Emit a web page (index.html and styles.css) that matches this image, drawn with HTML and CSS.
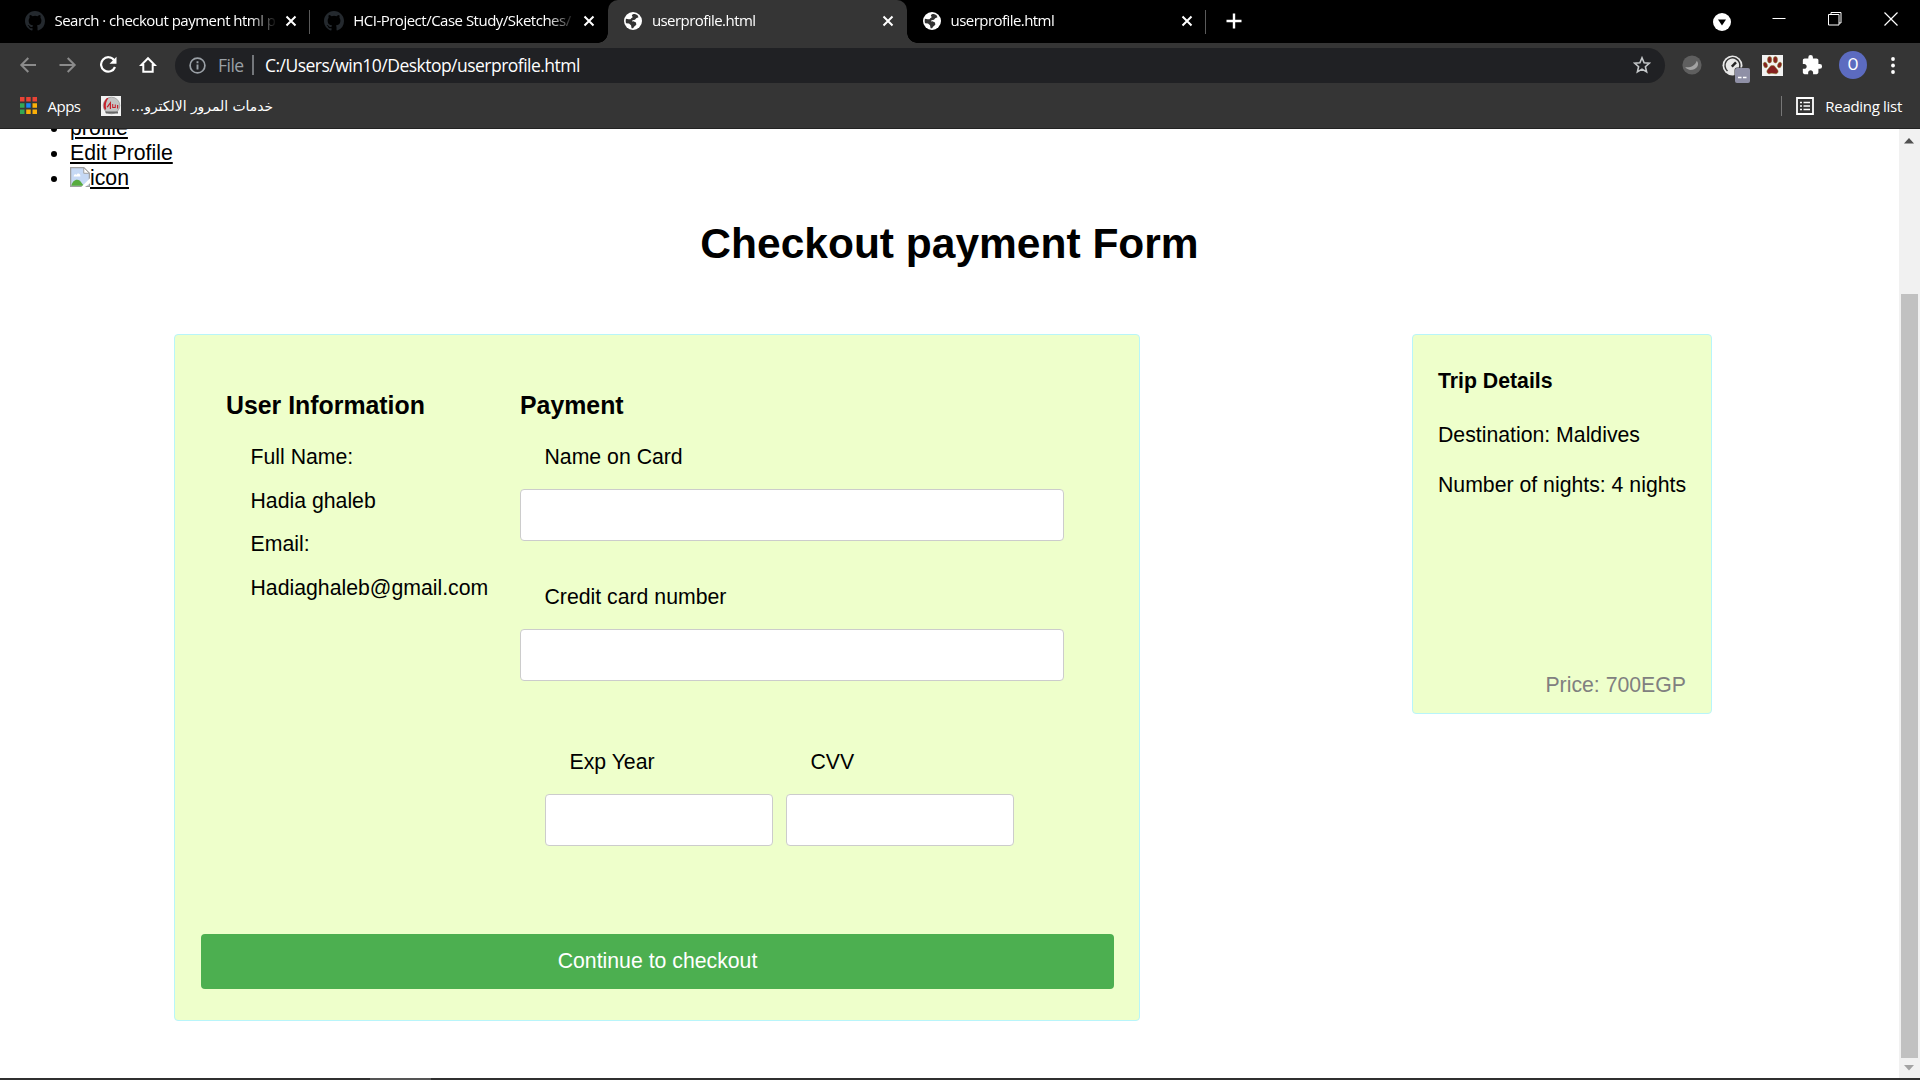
FILE: index.html
```html
<!DOCTYPE html>
<html lang="en">
<head>
<meta charset="utf-8">
<title>userprofile.html</title>
<link rel="stylesheet" href="styles.css">
</head>
<body>
<svg class="defs" width="0" height="0">
  <symbol id="github" viewBox="0 0 16 16"><path d="M8 0C3.58 0 0 3.58 0 8c0 3.54 2.29 6.53 5.47 7.59.4.07.55-.17.55-.38v-1.49c-2.01.37-2.53-.49-2.69-.94-.09-.23-.48-.94-.82-1.13-.28-.15-.68-.52-.01-.53.63-.01 1.08.58 1.23.82.72 1.21 1.87.87 2.33.66.07-.52.28-.87.51-1.07-1.78-.2-3.64-.89-3.64-3.95 0-.87.31-1.59.82-2.15-.08-.2-.36-1.02.08-2.12 0 0 .67-.21 2.2.82a7.6 7.6 0 0 1 4 0c1.53-1.04 2.2-.82 2.2-.82.44 1.1.16 1.92.08 2.12.51.56.82 1.27.82 2.15 0 3.07-1.87 3.75-3.65 3.95.29.25.54.73.54 1.48v2.2c0 .21.15.46.55.38A8 8 0 0 0 16 8c0-4.42-3.58-8-8-8z" fill="#24292e"/></symbol>
  <symbol id="globe" viewBox="0 0 18 18"><circle cx="9" cy="9" r="9" fill="#fff"/><path class="land" d="M9.500 2C8 2.600 7.500 3.500 8.200 4.200 9 5 8.600 5.800 7.500 6L6.500 7.300 4.500 7.200 2 6.800C1.600 8 1.600 10 2.100 11.200L5 11.500 7 13.300 7.600 16.200C9 16.500 9.600 16 9.800 15L12.300 12.800 12 10.500 9.500 9.300 8 9.500 8.500 8.200 11 7.800 12.200 6.300 14.500 5.200 13.500 3.300C12.500 2.400 11 1.800 9.500 2Z"/></symbol>
  <symbol id="close" viewBox="0 0 12 12"><path d="M1.500 1.500l9 9M10.500 1.500l-9 9" stroke="#fff" stroke-width="2" fill="none"/></symbol>
</svg>
<div class="window">
  <header class="tabstrip">
    <div class="tab"><svg class="fav big"><use href="#github"/></svg><span class="tab-title t1">Search · checkout payment html p</span><svg class="x"><use href="#close"/></svg></div>
    <div class="tab plain"><svg class="fav big"><use href="#github"/></svg><span class="tab-title t2">HCI-Project/Case Study/Sketches/</span><svg class="x"><use href="#close"/></svg></div>
    <div class="tab active"><svg class="fav"><use href="#globe"/></svg><span class="tab-title t3">userprofile.html</span><svg class="x"><use href="#close"/></svg></div>
    <div class="tab dark"><svg class="fav"><use href="#globe"/></svg><span class="tab-title t3">userprofile.html</span><svg class="x"><use href="#close"/></svg></div>
    <svg class="newtab" viewBox="0 0 16 16"><path d="M8 0.500v15M0.500 8h15" stroke="#fff" stroke-width="2.400"/></svg>
    <div class="controls">
      <svg width="18" height="18" viewBox="0 0 18 18"><circle cx="9" cy="9" r="9" fill="#fff"/><path d="M5 6.500h8L9 12.500z" fill="#000"/></svg>
      <svg width="14" height="14" viewBox="0 0 14 14"><path d="M0.500 6.500h13" stroke="#fff"/></svg>
      <svg width="14" height="14" viewBox="0 0 14 14"><path d="M0.500 2.500h10.500v10.500H0.500zM3 2.500V0.500h10v10.500h-2" fill="none" stroke="#fff"/></svg>
      <svg width="14" height="14" viewBox="0 0 14 14"><path d="M0.500 0.500l13 13M13.500 0.500l-13 13" stroke="#fff" stroke-width="1.200"/></svg>
    </div>
  </header>
  <div class="toolbar">
    <div class="nav">
      <svg width="18" height="18" viewBox="0 0 18 18"><path d="M17 9H2.300M9.300 2L2.300 9l7 7" fill="none" stroke="#8b8b8b" stroke-width="2"/></svg>
      <svg width="18" height="18" viewBox="0 0 18 18"><path d="M0.500 9h15M8.700 2l7 7-7 7" fill="none" stroke="#8b8b8b" stroke-width="2"/></svg>
      <svg width="18" height="18" viewBox="0 0 18 18"><path d="M15.200 4.300A7.200 7.200 0 1 0 16 11" fill="none" stroke="#fff" stroke-width="2.200"/><path d="M17.500 0.800v7h-7z" fill="#fff"/></svg>
      <svg width="18" height="18" viewBox="0 0 18 18"><path d="M9 2.200L2.300 9h2v6.800h9.400V9h2z" fill="none" stroke="#fff" stroke-width="2"/></svg>
    </div>
    <div class="omnibox">
      <svg width="17" height="17" viewBox="0 0 17 17"><circle cx="8.500" cy="8.500" r="7.400" fill="none" stroke="#9aa0a6" stroke-width="1.700"/><path d="M8.500 7.500v5M8.500 4.300v1.900" stroke="#9aa0a6" stroke-width="1.900"/></svg>
      <span class="scheme">File</span>
      <span class="url">C:/Users/win10/Desktop/userprofile.html</span>
      <svg class="star" width="18" height="18" viewBox="0 0 18 18"><path d="M9 1.800l2.100 4.900 5.300.500-4 3.500 1.200 5.200L9 13.100l-4.600 2.800 1.200-5.200-4-3.500 5.300-.500z" fill="none" stroke="#c4c7c9" stroke-width="1.600"/></svg>
    </div>
    <div class="extensions">
      <svg width="20" height="20" viewBox="0 0 20 20"><circle cx="10" cy="10" r="9.600" fill="#5f5f5f"/><path d="M3.200 12C7 13 13 11.500 14.800 5.800 17.500 9 15.800 13.800 10.500 14.800 7 15.300 4.500 14 3.200 12z" fill="#a3a3a3"/></svg>
      <svg width="28" height="28" viewBox="0 0 28 28"><circle cx="10.500" cy="10.500" r="10" fill="#e8e8e8"/><path d="M5.500 16A7.500 7.500 0 1 1 17.500 13" fill="none" stroke="#333" stroke-width="1.500"/><path d="M9.800 11.700L14 7.300" stroke="#222" stroke-width="2.400"/><rect x="12.500" y="12.500" width="16" height="16" rx="2.500" fill="#353535"/><rect x="13" y="13" width="15" height="15" rx="2" fill="#8f90a6"/><path d="M16 22.500h3.500M21 22.500h3.500" stroke="#fff" stroke-width="1.300"/></svg>
      <svg width="21" height="21" viewBox="0 0 21 21"><path d="M0 0h21v21H0z" fill="#f2f2f2"/><g fill="#862121" stroke="#8a8a30" stroke-width=".5"><ellipse cx="7.600" cy="4.800" rx="2.100" ry="3.200"/><ellipse cx="13.400" cy="4.800" rx="2.100" ry="3.200"/><ellipse cx="3.400" cy="10" rx="1.900" ry="2.900" transform="rotate(-20 3.400 10)"/><ellipse cx="17.600" cy="10" rx="1.900" ry="2.900" transform="rotate(20 17.600 10)"/><path d="M10.500 10.500c2.600 0 3 2.200 4.800 4 2 2.300 0 4.600-2 4.300-2-.3-3.600-.9-5.600 0-2 .3-4-2-2-4.300 1.800-1.800 2.200-4 4.800-4z"/></g></svg>
      <svg width="22" height="22" viewBox="0 0 24 24"><path d="M20.500 11H19V7c0-1.100-.9-2-2-2h-4V3.500a2.500 2.500 0 0 0-5 0V5H4c-1.100 0-1.990.9-1.990 2v3.800H3.500c1.490 0 2.700 1.210 2.700 2.700s-1.210 2.700-2.700 2.700H2V20c0 1.100.9 2 2 2h3.800v-1.500c0-1.490 1.210-2.700 2.700-2.700s2.700 1.210 2.700 2.700V22H17c1.100 0 2-.9 2-2v-4h1.500a2.500 2.500 0 0 0 0-5z" fill="#fff"/></svg>
      <span class="avatar">O</span>
      <svg width="4" height="17" viewBox="0 0 4 17"><g fill="#fff"><circle cx="2" cy="2" r="1.900"/><circle cx="2" cy="8.500" r="1.900"/><circle cx="2" cy="15" r="1.900"/></g></svg>
    </div>
  </div>
  <div class="bookmarks">
    <svg width="17" height="17" viewBox="0 0 17 17"><g fill="#ea4335"><path d="M0 0h4.500v4.500H0zM6.200 0h4.500v4.500H6.200zM12.500 0H17v4.500h-4.500z"/></g><path d="M0 6.200h4.500v4.500H0zM0 12.500h4.500V17H0z" fill="#34a853"/><path d="M6.200 6.200h4.500v4.500H6.200z" fill="#1a86f5"/><path d="M12.500 6.200H17v4.500h-4.500zM6.200 12.500h4.500V17H6.200zM12.500 12.500H17V17h-4.500z" fill="#fbaf08"/></svg>
    <span class="apps">Apps</span>
    <svg width="20" height="20" viewBox="0 0 20 20"><path d="M0 0h20v20H0z" fill="#f2f2f2"/><circle cx="10.500" cy="9.500" r="8.300" fill="#c3c3c3" stroke="#999" stroke-width=".8"/><path d="M4 15.500h13v2H5z" fill="#666"/><path d="M6 2C2 6 2 11 4 14l1.200-1C4.200 9 5 5 7.500 2zM5.500 11l4.500-6v8H8.800V8.500L6.800 11.500zM11.200 8h1v3h1.600V8.500h1V12h-3.600zM16 9h1.200v3.500H16z" fill="#c5202b"/></svg>
    <span class="arabic" dir="rtl" lang="ar">خدمات المرور الالكترو...</span>
    <div class="reading">
      <svg width="18" height="18" viewBox="0 0 18 18"><path d="M1 1h16v16H1z" fill="none" stroke="#fff" stroke-width="1.800"/><path d="M4 5.500h2M4 9h2M4 12.500h2M7.500 5.500H14M7.500 9H14M7.500 12.500H14" stroke="#fff" stroke-width="1.600"/></svg>
      <span class="reading-text">Reading list</span>
    </div>
  </div>
  <div class="viewport">
    <main class="page">
      <ul class="menu">
        <li><a>profile</a></li>
        <li><a>Edit Profile</a></li>
        <li><a class="img-link"><svg class="broken" width="20" height="20" viewBox="0 0 16 16"><path d="M.5.500h10.500l4.500 4.500v10.500H.5z" fill="#c6d9f5" stroke="#a0a0a0"/><path d="M3 7.500c0-2 2-2 2.300-1.200C6 4.500 8.500 5 8.300 7.500z" fill="#fff"/><path d="M1 15c1-4 4-6 7-4l3 4z" fill="#57ab3e"/><path d="M11 .5V5h4.500z" fill="#fff" stroke="#a0a0a0" stroke-width=".8"/><path d="M16 9L9 16h3l4-3z" fill="#fff"/></svg>icon</a></li>
      </ul>
      <h1>Checkout payment Form</h1>
      <div class="row">
        <form class="card checkout">
          <div class="columns">
            <section class="user">
              <h3>User Information</h3>
              <p>Full Name:</p><p>Hadia ghaleb</p><p>Email:</p><p>Hadiaghaleb@gmail.com</p>
            </section>
            <section class="payment">
              <h3>Payment</h3>
              <label for="cname">Name on Card</label>
              <input id="cname" type="text">
              <label for="ccnum">Credit card number</label>
              <input id="ccnum" type="text">
              <div class="pair">
                <div><label for="exp">Exp Year</label><input id="exp" type="text"></div>
                <div><label for="cvv">CVV</label><input id="cvv" type="text"></div>
              </div>
            </section>
          </div>
          <button type="button" class="btn">Continue to checkout</button>
        </form>
        <aside class="card trip">
          <h4>Trip Details</h4>
          <p>Destination: Maldives</p>
          <p>Number of nights: 4 nights</p>
          <p class="price">Price: 700EGP</p>
        </aside>
      </div>
    </main>
    <div class="scrollbar">
      <svg width="10" height="6" viewBox="0 0 10 6"><path d="M5 0l5 5.500H0z" fill="#505050"/></svg>
      <div class="thumb"></div>
      <svg width="10" height="6" viewBox="0 0 10 6"><path d="M5 5.500L0 0h10z" fill="#a3a3a3"/></svg>
    </div>
  </div>
  <footer class="taskbar"><div class="running"></div></footer>
</div>
</body>
</html>
```
FILE: styles.css
```css
* { box-sizing: border-box; }
body { margin: 0; background: #fff; font-family: "Liberation Sans", Arial, sans-serif; font-size: 21.25px; line-height: 24px; color: #000; overflow: hidden; }
.defs { display: block; position: absolute; }
svg { flex: none; display: block; }
.window { width: 1920px; height: 1080px; display: flex; flex-direction: column; }
.tabstrip, .toolbar, .bookmarks { font-family: "Open Sans", "Noto Sans", sans-serif; color: #fff; flex: none; display: flex; white-space: nowrap; }

/* tabs */
.tabstrip { height: 43px; background: #000; padding-left: 11px; font-size: 15px; }
.tab { width: 298.7px; height: 43px; display: flex; align-items: center; padding: 0 14px 1px; position: relative; }
.tab::after { content: ""; position: absolute; right: 0; top: 10px; width: 1px; height: 24px; background: #5a5a5a; }
.tab.plain::after { display: none; }
.tab.active { background: #353535; border-radius: 10px 10px 0 0; }
.tab.active::before, .tab.active::after { content: ""; position: absolute; top: auto; bottom: 0; width: 10px; height: 10px; background: radial-gradient(circle at 0 0, transparent 9.5px, #353535 10px); }
.tab.active::before { left: -10px; }
.tab.active::after { right: -10px; background: radial-gradient(circle at 100% 0, transparent 9.5px, #353535 10px); }
.fav { width: 18px; height: 18px; margin: 0 10px 0 1.5px; }
.fav.big { width: 20px; height: 20px; margin: 0 9.5px 0 0; }
.land { fill: #333; }
.tab.dark .fav { color: #000; }
.tab-title { width: 220px; flex: none; line-height: 22px; margin-top: -3px; -webkit-mask-image: linear-gradient(90deg, #000 195px, transparent 222px); mask-image: linear-gradient(90deg, #000 195px, transparent 222px); }
.t1 { letter-spacing: -0.52px; }
.t2 { letter-spacing: -0.5px; }
.t3 { letter-spacing: -0.55px; }
.x { width: 12px; height: 12px; margin-left: 10px; }
.newtab { width: 16px; height: 16px; margin: 13px 0 0 20px; }
.controls { margin-left: auto; display: flex; gap: 42px; padding: 12px 22px 0 0; }
.controls svg:first-child { margin: 1px -1px 0 0; }

/* toolbar */
.toolbar { height: 45px; background: #353535; align-items: center; }
.nav { width: 175px; display: flex; gap: 22px; padding: 0 0 1px 18.5px; }
.omnibox { width: 1490px; height: 35px; border-radius: 18px; background: #202124; display: flex; align-items: center; padding: 0 14px 1px; font-size: 17.5px; }
.scheme { color: #9aa0a6; margin-left: 12px; width: 36px; border-right: 2px solid #74777b; line-height: 20px; letter-spacing: -0.5px; }
.url { margin-left: 11px; letter-spacing: -0.52px; }
.star { margin-left: auto; }
.extensions { display: flex; align-items: center; padding: 0 0 1px 17px; }
.extensions svg:nth-child(2) { margin: 8px 0 0 20px; }
.extensions svg:nth-child(3) { margin-left: 12px; }
.extensions svg:nth-child(4) { margin-left: 18px; }
.avatar { width: 28px; height: 28px; margin: 0 24px 0 16px; border-radius: 50%; background: #5c6bc0; font: 16px/28px Roboto, sans-serif; text-align: center; }

/* bookmarks */
.bookmarks { height: 41px; background: #353535; border-bottom: 1px solid #222; align-items: center; padding: 0 18px 5px 19.5px; font-size: 15px; }
.apps { width: 64.5px; padding-left: 11px; letter-spacing: -0.5px; flex: none; }
.arabic { margin-left: 10px; font-family: "DejaVu Sans", sans-serif; font-size: 13.9px; }
.reading { margin-left: auto; display: flex; align-items: center; gap: 11px; height: 20px; border-left: 1px solid #777; padding-left: 14px; letter-spacing: -0.3px; }

/* page */
.viewport { flex: 1; min-height: 0; display: flex; overflow: hidden; }
.page { flex: 1; }
.menu { margin: -13px 0 0; padding-left: 70px; line-height: 25px; }
.menu a { text-decoration: underline; text-decoration-thickness: 2px; text-underline-offset: 2px; }
.broken { display: inline-block; vertical-align: -2px; }
h1 { font-size: 42.5px; line-height: 48px; margin: 29px 0 66px; text-align: center; }
h3, h4, p { margin: 0; }
.row { display: flex; justify-content: space-between; align-items: flex-start; padding: 0 187px 0 174px; }
.card { background: #eeffcb; border: 1px solid #b8f5fa; border-radius: 4px; }
.checkout { width: 966px; height: 687px; padding: 55px 25px 0 26px; }
.columns { display: grid; grid-template-columns: 294px 544px; padding-left: 25px; }
h3 { font-size: 24.86px; line-height: 30px; margin-bottom: 25px; }
.user p { margin: 0 0 19.6px 24.5px; }
label { display: block; margin: 0 0 20px 24.5px; }
input { display: block; width: 100%; height: 52px; border: 1px solid #ccc; border-radius: 4px; background: #fff; margin-bottom: 44px; padding: 15px; }
.pair { display: flex; gap: 13px; padding: 25px 0 0 25px; }
.pair div { width: 228px; }
.btn { display: block; width: 100%; height: 55px; margin-top: 44px; padding: 0 0 1px; border: 0; border-radius: 4px; background: #4caf50; color: #fff; font: 21.25px/24px "Liberation Sans", Arial, sans-serif; }
.trip { width: 300px; height: 380px; padding: 34px 25px 0; white-space: nowrap; }
h4 { font-size: 21.25px; margin-bottom: 30px; }
.trip p { margin-bottom: 26px; }
.trip .price { margin-top: 176px; text-align: right; color: #808080; }

.scrollbar { width: 21px; background: #f1f1f1; display: flex; flex-direction: column; align-items: center; padding: 9px 0; }
.scrollbar svg { margin-right: 1px; }
.thumb { flex: none; width: 17px; height: 764px; margin: 150px 0 7px; background: #c1c1c1; }
.taskbar { height: 2px; flex: none; background: #303030; padding-left: 370px; }
.running { width: 61px; height: 2px; background: #555; }
```
